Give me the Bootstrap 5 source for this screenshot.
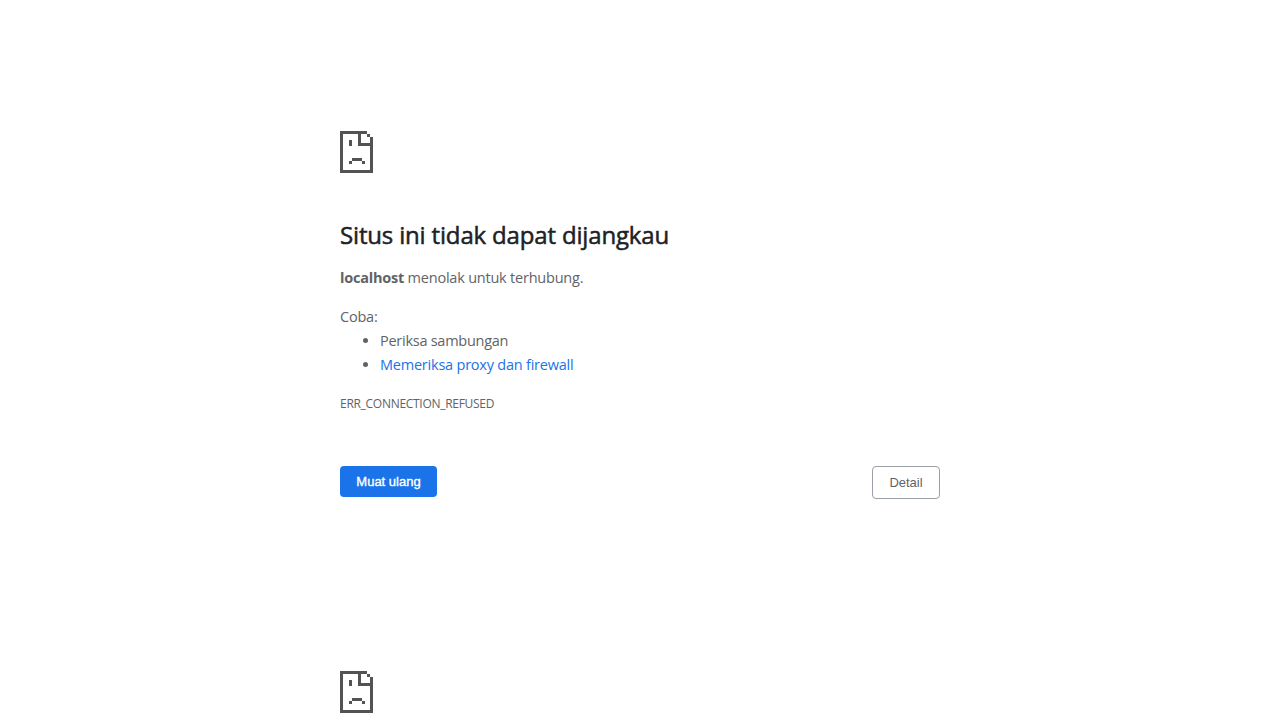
<!DOCTYPE html>
<html lang="id">
<head>
<meta charset="utf-8">
<meta name="viewport" content="width=device-width, initial-scale=1">
<title>localhost</title>
<link rel="stylesheet" href="https://cdn.jsdelivr.net/npm/bootstrap@5.3.0/dist/css/bootstrap.min.css">
<style>
body{font-family:"Open Sans","Noto Sans",sans-serif;font-size:15px;line-height:24px;color:#5f6368}
.error-frame{height:540px}
.error-body{width:600px;padding-top:131px}
.error-icon{width:33px;height:42px;fill:#535353;shape-rendering:crispEdges}
.error-title{font-size:24px;font-weight:500;line-height:30px;color:#202124;margin:47px 0 16px;letter-spacing:-.165px;-webkit-text-stroke:.5px #202124}
.error-text{font-size:14.5px;letter-spacing:-.22px}
.error-lead{margin-bottom:15px}
.error-code{font-size:12px;line-height:18px;margin-top:18px;margin-bottom:53px;letter-spacing:-.29px}
.error-list{padding-left:40px}
.error-step{letter-spacing:-.26px}
.error-link{color:#1a73e8}
.btn-error{font:400 13px/15px "Liberation Sans",sans-serif;padding:8px 16px;border-radius:4px}
.btn-reload{background:#1a73e8;color:#fff;border:0;width:97px;height:31px;-webkit-text-stroke:.35px #fff}
.btn-detail{border:1px solid #9aa0a6;color:#5f6368;width:68px;height:33px}
</style>
</head>
<body class="bg-white">
<svg class="d-none"><symbol id="sad-page" viewBox="0 0 33 42"><path d="M0 0H27V3H21V12H30V6H33V42H0ZM3 3V39H30V15H18V3ZM27 3H30V6H27ZM9 9H12V15H9ZM12 27H22V30H12ZM9 30H12V33H9ZM22 30H25V33H22Z" fill-rule="evenodd"/></symbol></svg>
<section class="error-frame">
  <main class="error-body mx-auto">
    <svg class="error-icon d-block"><use href="#sad-page"/></svg>
    <h1 class="error-title">Situs ini tidak dapat dijangkau</h1>
    <p class="error-text error-lead"><strong>localhost</strong> menolak untuk terhubung.</p>
    <p class="error-text mb-0">Coba:</p>
    <ul class="error-list error-text mb-0">
      <li class="error-step">Periksa sambungan</li>
      <li><a class="error-link text-decoration-none" href="#">Memeriksa proxy dan firewall</a></li>
    </ul>
    <div class="error-code">ERR_CONNECTION_REFUSED</div>
    <div class="d-flex justify-content-between align-items-start">
      <button class="btn btn-error btn-reload">Muat ulang</button>
      <button class="btn btn-error btn-detail">Detail</button>
    </div>
  </main>
</section>
<section>
  <div class="error-body mx-auto"><svg class="error-icon d-block"><use href="#sad-page"/></svg></div>
</section>
<script src="https://cdn.jsdelivr.net/npm/bootstrap@5.3.0/dist/js/bootstrap.bundle.min.js"></script>
</body>
</html>
